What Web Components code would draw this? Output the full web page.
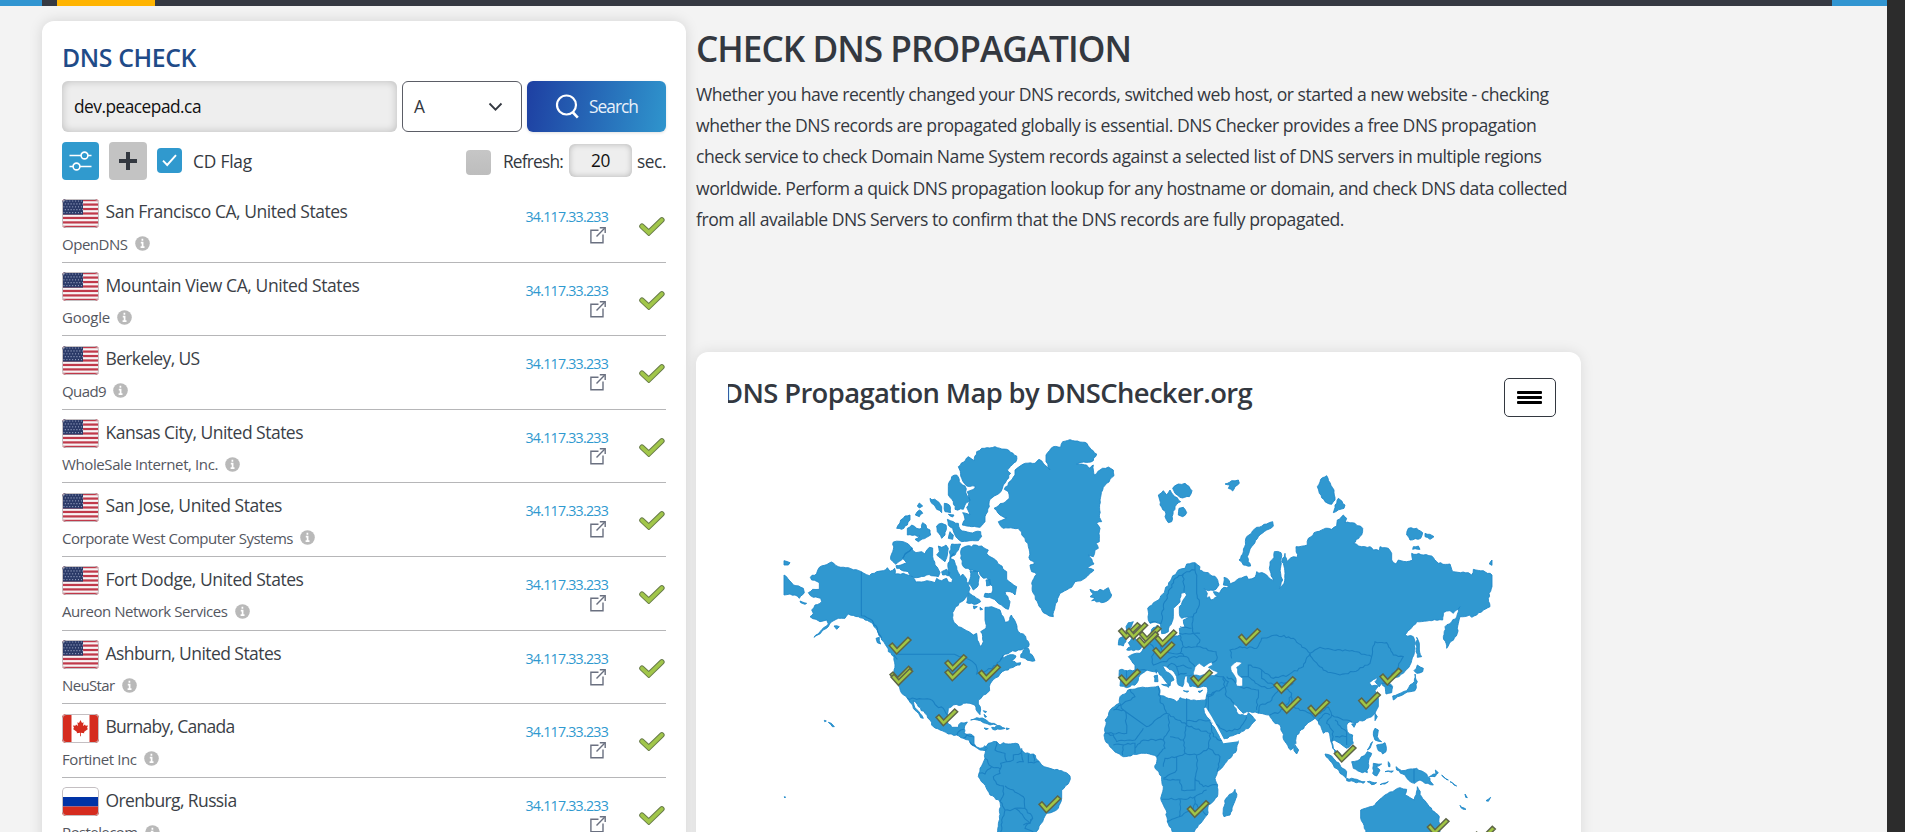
<!DOCTYPE html>
<html lang="en">
<head>
<meta charset="utf-8">
<title>DNS Checker</title>
<style>
html,body{margin:0;height:832px;overflow:hidden}
body{font-family:"Open Sans","Noto Sans",sans-serif;background:#f3f3f3;color:#333840}
</style>
</head>
<body>
<dns-app></dns-app>
<script>
const make = (name, render, after) => customElements.define(name, class extends HTMLElement {
  connectedCallback() {
    if (this.shadowRoot) return;
    this.attachShadow({ mode: 'open' }).innerHTML = render(this);
    if (after) after(this);
  }
});

/* Page frame */
make('dns-app', () => `
<style>
:host{display:grid;grid-template-columns:1887px 18px;height:832px;overflow:hidden}
.gutter{background:#2c2c2c}
.page{display:flex;flex-direction:column;min-width:0;height:832px;overflow:hidden}
main{display:grid;grid-template-columns:644px 885px;column-gap:10px;padding-left:42px;align-items:start}
</style>
<div class="page"><top-strip></top-strip>
<main><check-panel></check-panel><info-column></info-column></main></div>
<div class="gutter"></div>`);

make('top-strip', () => `
<style>
:host{display:flex;height:6px;background:#353942;flex:none}
i{display:block;height:6px}
.a{width:42px;background:#3195d1}.b{width:98px;margin-left:15px;background:#ffb400}.c{width:55px;margin-left:auto;background:#3195d1}
</style><i class="a"></i><i class="b"></i><i class="c"></i>`);

/* Left panel */
const servers = [
  ['us', 'San Francisco CA, United States', 242, 'OpenDNS', 65.5],
  ['us', 'Mountain View CA, United States', 254, 'Google', 48],
  ['us', 'Berkeley, US', 94, 'Quad9', 44],
  ['us', 'Kansas City, United States', 197.5, 'WholeSale Internet, Inc.', 156],
  ['us', 'San Jose, United States', 176.5, 'Corporate West Computer Systems', 231],
  ['us', 'Fort Dodge, United States', 198, 'Aureon Network Services', 165.5],
  ['us', 'Ashburn, United States', 175.5, 'NeuStar', 52.5],
  ['ca', 'Burnaby, Canada', 129, 'Fortinet Inc', 74.5],
  ['ru', 'Orenburg, Russia', 131, 'Rostelecom', 75.5]
];
make('check-panel', () => `
<style>
:host{display:block;box-sizing:border-box;margin-top:15px;height:840px;padding:22px 20px 0;background:#fff;border-radius:12px;box-shadow:0 0 14px rgba(0,0,0,.13)}
h2{margin:0;font-size:24.8px;line-height:28px;font-weight:600;color:#1f4b88;height:38px}
</style>
<h2><fit-text w="134">DNS CHECK</fit-text></h2>
<search-bar></search-bar><option-bar></option-bar>
${servers.map(s => `<server-row flag="${s[0]}" place="${s[1]}" pw="${s[2]}" org="${s[3]}" ow="${s[4]}"></server-row>`).join('')}`);

make('search-bar', () => `
<style>
:host{display:grid;grid-template-columns:335px 120px 139px;column-gap:5px;height:51px;font-size:17.3px}
:host>div{box-sizing:border-box;height:51px;border-radius:6px;display:flex;align-items:center}
.in{background:#eee;padding-left:12px;color:#111;box-shadow:inset 0 0 8px rgba(0,0,0,.22)}
.sel{border:1px solid #5b5d66;padding:0 18px 0 11px;justify-content:space-between}
.go{background:linear-gradient(100deg,#1e3fa2,#2f95cd);color:#e9f1fa;padding-left:28px;gap:9px;box-shadow:0 1px 3px rgba(0,0,0,.12)}
svg{display:block;flex:none}
</style>
<div class="in"><fit-text w="127">dev.peacepad.ca</fit-text></div>
<div class="sel"><fit-text w="12">A</fit-text><svg width="15" height="10" viewBox="0 0 15 10" fill="none" stroke="#333840" stroke-width="1.8"><path d="M1.5 1.5L7.5 7.7L13.5 1.5"/></svg></div>
<div class="go"><svg width="25" height="25" viewBox="0 0 25 25" fill="none" stroke="#fff" stroke-width="2.2"><circle cx="11.5" cy="11" r="9.5"/><path d="M17.5 18L22.8 23.6" stroke-width="2.6"/></svg><fit-text w="49">Search</fit-text></div>`);

make('option-bar', () => `
<style>
:host{display:flex;align-items:center;height:57px;font-size:17.3px;box-sizing:border-box}
.btn{width:37px;height:38px;border-radius:4px;background:#309ace;display:grid;place-items:center;margin-right:10px}
.g{background:#c3c3c3;width:38px}
.chk{width:25px;height:25px;border-radius:4px;background:#3099ce;display:grid;place-items:center;margin-right:11px}
.off{background:linear-gradient(#c6c6c6,#bdbdbd);margin:3px 12px 0 auto}
.num{width:63px;height:33px;border-radius:6px;background:#eee;box-shadow:inset 0 0 6px rgba(0,0,0,.25);display:grid;place-items:center;margin:0 5px 0 6px;color:#111}
.t{margin-top:1px}svg{display:block}
</style>
<div class="btn"><svg width="23" height="20" viewBox="0 0 23 20" fill="none" stroke="#fff" stroke-width="1.6"><path d="M.5 4.5H12M19 4.5H22.5M.5 15.5H4M11 15.5H22.5"/><circle cx="15.5" cy="4.5" r="3.4"/><circle cx="7.5" cy="15.5" r="3.4"/></svg></div>
<div class="btn g"><svg width="18" height="18" viewBox="0 0 18 18"><path d="M9 0V18M0 9H18" stroke="#333840" stroke-width="4"/></svg></div>
<div class="chk"><svg width="15" height="13" viewBox="0 0 15 13"><path d="M1 6.7L5.2 11L14 1.2" fill="none" stroke="#fff" stroke-width="1.9"/></svg></div>
<span class="t"><fit-text w="59">CD Flag</fit-text></span>
<div class="chk off"></div>
<span class="t"><fit-text w="60">Refresh:</fit-text></span>
<div class="num"><fit-text w="19">20</fit-text></div>
<span class="t"><fit-text w="29">sec.</fit-text></span>`);

make('server-row', h => `
<style>
:host{display:grid;grid-template-columns:1fr 90px 58px;box-sizing:border-box;height:73.6px;border-bottom:1.6px solid #b6b6b8}
.l1{display:flex;align-items:center;height:30px;margin-top:9px;gap:6.5px;font-size:17.5px;color:#3b3f47}
.l1 fit-text{margin-top:-4px}
.l2{display:flex;align-items:center;height:19px;margin-top:6px;gap:7px;font-size:15px;color:#54575f}
.ip{text-align:right;color:#2f99cf;font-size:14.2px;line-height:18px;padding-top:19px;display:flex;flex-direction:column;align-items:flex-end}
.ip svg{margin:1px 2px 0 0}
.ok{display:block;margin:28px 0 0 31px}
svg{display:block;flex:none}
</style>
<div><div class="l1"><country-flag code="${h.getAttribute('flag')}"></country-flag><fit-text w="${h.getAttribute('pw')}">${h.getAttribute('place')}</fit-text></div>
<div class="l2"><fit-text w="${h.getAttribute('ow')}">${h.getAttribute('org')}</fit-text><svg width="15" height="15" viewBox="0 0 15 15"><circle cx="7.5" cy="7.5" r="7.3" fill="#b9b9b9"/><path d="M7.4 2.8V4.8M5.8 6.7H7.6V11.2M5.6 11.2H9.5" fill="none" stroke="#fff" stroke-width="1.7"/></svg></div></div>
<div class="ip"><fit-text w="82.5">34.117.33.233</fit-text>
<svg width="16" height="17" viewBox="0 0 16 17" fill="none" stroke="#6a7080" stroke-width="1.4"><path d="M8.5 3.2H.9V15.7H13V7.5"/><path d="M6.5 9.5L14.6 1.3"/><path d="M9.8.8H15.2V6"/></svg></div>
<svg class="ok" width="26" height="19" viewBox="0 0 26 19"><path d="M3 9.3L9.8 15.6L22.8 3" fill="none" stroke="#677a48" stroke-width="5.6" stroke-linecap="round"/><path d="M3 9.3L9.8 15.6L22.8 3" fill="none" stroke="#a1c64a" stroke-width="3.7" stroke-linecap="round"/></svg>`);

const flags = {
  us: () => {
    let s = '<rect width="37" height="29" fill="#f7f4f5"/>';
    for (let i = 0; i < 7; i++) s += `<rect y="${(i * 4.46).toFixed(2)}" width="37" height="2.23" fill="#c0394a"/>`;
    s += '<rect width="21" height="15.6" fill="#2b3a68"/>';
    for (let r = 0; r < 5; r++) for (let c = 0; c < 7; c++) s += `<circle cx="${2 + c * 2.9 + (r % 2) * 1.3}" cy="${2 + r * 2.9}" r=".6" fill="#a3adc9"/>`;
    return s;
  },
  ca: () => '<rect width="37" height="29" fill="#fff"/><rect width="9.5" height="29" fill="#d52b1e"/><rect x="27.5" width="9.5" height="29" fill="#d52b1e"/><path fill="#d52b1e" d="M18.5 6L20 9L21.6 8.2L21 12L23 10.4L23.6 11.7L26 11.4L25 14L26 15L22 18L22.3 19.2L18.9 18.7V22.3H18.1V18.7L14.7 19.2L15 18L11 15L12 14L11 11.4L13.4 11.7L14 10.4L16 12L15.4 8.2L17 9Z"/>',
  ru: () => '<rect width="37" height="29" fill="#fff"/><rect y="10" width="37" height="9.5" fill="#0033a6"/><rect y="19.5" width="37" height="9.5" fill="#d52b1e"/>'
};
make('country-flag', h => `
<style>:host{display:block;width:37px;height:29px;border-radius:4px;overflow:hidden;flex:none}svg{display:block}</style>
<svg width="37" height="29" viewBox="0 0 37 29">${flags[h.getAttribute('code')]()}<rect x=".5" y=".5" width="36" height="28" rx="3.5" fill="none" stroke="#c4bfc2"/></svg>`);

/* Right column */
make('info-column', () => `
<style>
:host{display:block}
h1{margin:19px 0 0;font-size:35.2px;line-height:46px;font-weight:600;color:#333840}
p{margin:8px 0 0;font-size:17.6px;line-height:31.2px;height:156px}
p fit-text{display:block}
map-card{margin-top:117px}
</style>
<h1><fit-text w="435">CHECK DNS PROPAGATION</fit-text></h1>
<p><fit-text w="852.5">Whether you have recently changed your DNS records, switched web host, or started a new website - checking</fit-text>
<fit-text w="840.5">whether the DNS records are propagated globally is essential. DNS Checker provides a free DNS propagation</fit-text>
<fit-text w="845.5">check service to check Domain Name System records against a selected list of DNS servers in multiple regions</fit-text>
<fit-text w="871">worldwide. Perform a quick DNS propagation lookup for any hostname or domain, and check DNS data collected</fit-text>
<fit-text w="648">from all available DNS Servers to confirm that the DNS records are fully propagated.</fit-text></p>
<map-card></map-card>`);

make('map-card', () => `
<style>
:host{display:block;box-sizing:border-box;height:520px;background:#fff;border-radius:12px;box-shadow:0 0 14px rgba(0,0,0,.1);padding:20px 25px 0 32px;overflow:hidden}
header{display:flex;justify-content:space-between;height:48px}
.ttl{overflow:hidden;height:48px;line-height:42px;font-size:27.4px;font-weight:600;width:600px}
.ttl fit-text{margin-left:-5px}
.menu{box-sizing:border-box;margin-top:6px;width:52px;height:39px;border:1.4px solid #333840;border-radius:5px;display:flex;flex-direction:column;align-items:center;justify-content:center;gap:2px;padding-right:1px}
.menu i{width:25px;height:3px;border-radius:1px;background:#000}
world-map{margin-left:56px}
</style>
<header><div class="ttl"><fit-text w="529">DNS Propagation Map by DNSChecker.org</fit-text></div><div class="menu"><i></i><i></i><i></i></div></header>
<world-map></world-map>`);

/* Map geometry: west group uses absolute units, east group is shifted by 930 */
const west = [
'121,472 140,460 148,442 163,436 184,426 205,440 235,443 274,455 298,467 320,455 340,452 352,443 360,454 374,445 375,462 400,460 425,468 434,478 437,486 470,482 495,488 500,475 515,482 530,475 535,486 545,488 548,478 536,462 534,430 540,415 552,420 560,440 565,458 572,470 578,462 585,470 590,485 600,505 595,520 590,530 575,545 557,560 548,578 549,600 565,620 590,632 610,645 620,640 622,660 632,680 640,665 638,650 632,635 648,625 645,600 645,562 665,560 690,570 700,590 705,607 715,605 724,585 738,610 745,635 760,642 775,665 776,680 768,684 745,690 720,697 700,706 690,718 710,708 730,704 738,708 735,715 725,722 735,725 740,730 752,728 750,735 730,742 718,745 715,750 697,755 690,762 685,770 665,785 658,800 659,812 640,825 625,840 625,852 632,870 630,884 622,875 614,855 600,850 580,850 575,855 550,855 535,865 532,885 532,905 545,922 565,922 572,908 592,906 583,925 582,940 600,942 612,950 612,970 618,980 630,985 645,977 652,985 647,992 630,990 622,985 605,975 597,960 580,955 560,945 535,942 510,930 485,915 480,900 465,880 445,860 430,842 432,855 450,880 460,895 452,893 440,875 430,865 428,855 412,835 395,820 385,795 372,775 372,750 375,735 372,710 355,695 350,680 335,660 325,640 318,625 305,608 285,600 265,590 235,582 225,595 205,595 185,605 175,620 155,635 132,652 150,635 175,612 170,600 150,605 138,598 120,590 130,580 125,570 135,555 155,545 152,535 130,532 115,518 128,508 148,508 148,488 125,480',
'760,690 775,685 778,700 790,710 795,722 780,722 765,715 752,712','318,655 328,652 332,672 322,668',
'370,366 390,364 415,372 428,385 410,400 395,420 378,433 362,418 368,395',
'425,385 438,398 455,395 465,402 478,382 488,384 488,410 495,435 510,458 505,470 470,465 440,473 425,468 415,455 380,445 378,437 400,432 410,428 398,415 405,400',
'505,378 515,382 528,375 535,385 532,405 525,425 512,415 500,405 508,395','545,372 572,372 565,390 555,405 540,415 538,395','515,455 530,448 540,458 535,468 518,465',
'575,385 590,378 605,380 610,375 635,378 655,390 650,400 670,415 690,435 710,455 710,478 725,490 740,500 735,525 720,515 705,515 720,545 715,568 700,560 680,545 665,535 642,530 645,520 665,520 668,500 655,478 635,470 628,455 600,450 580,440 572,415',
'600,452 622,455 628,470 625,495 610,510 595,490 602,470','597,518 615,530 632,545 620,552 590,548','610,558 622,560 612,567','648,480 660,478 662,495 650,498','630,562 638,568 631,570',
'412,325 425,315 440,325 455,325 458,308 468,315 470,325 480,330 482,345 470,352 445,365 435,358 450,348 412,345','380,325 392,300 405,288 420,285 420,300 412,315 395,328','442,258 448,249 458,258 448,264','436,285 448,270 458,280 448,290',
'480,235 500,242 515,260 515,278 500,268 485,250','523,250 538,255 542,278 525,275','535,283 552,285 548,291','500,318 515,310 528,315 525,345 515,355 502,335','540,335 550,345 548,358 535,355',
'532,298 550,305 565,310 570,328 600,338 632,335 635,350 625,362 600,362 575,365 555,345 548,325 535,315',
'545,170 560,165 568,185 585,198 590,225 600,240 585,255 580,268 555,268 550,245 535,225 535,200',
'565,140 595,110 612,122 620,95 635,85 675,80 710,88 740,108 738,125 712,150 722,160 710,180 700,195 688,220 660,238 658,260 645,290 645,305 630,322 605,320 577,315 585,298 578,278 600,285 590,262 600,240 592,215 615,205 615,198 590,198 575,175',
'735,150 760,132 795,130 807,118 820,130 840,150 828,125 828,105 850,80 872,82 878,65 900,59 945,67 980,102 970,122 920,132 950,135 960,145 970,135 972,165 990,150 1015,141 1030,150 1032,167 1010,190 998,210 990,240 988,285 995,305 980,310 990,325 988,365 978,370 985,385 975,390 970,410 955,405 972,432 952,445 972,450 940,478 915,485 905,502 870,520 862,545 855,560 850,590 838,588 820,578 802,545 790,520 785,490 800,462 785,455 780,435 795,430 780,420 775,380 765,355 745,325 700,325 685,305 710,293 690,285 672,265 718,235 715,215 703,208 735,165',
'960,508 975,515 990,508 1000,512 1015,503 1025,525 1015,540 995,548 965,542 975,535 960,530 970,522',
'647,992 645,985 655,970 680,965 690,975 700,968 715,972 745,972 750,985 765,1000 790,1002 808,1025 815,1035 840,1045 875,1052 900,1068 898,1085 875,1110 875,1135 865,1165 850,1175 830,1180 818,1205 795,1240 682,1240 688,1190 690,1145 660,1125 640,1090 625,1070 630,1045 645,1015',
'602,900 620,893 645,898 665,910 680,915 660,915 640,908 622,900','665,922 690,917 705,925 690,928 668,928','642,924 655,926 648,929','708,924 718,926 710,929','640,872 650,875 645,878','642,883 650,890 645,892',
'163,901 169,903 164,905','175,907 184,910 193,920 187,920 182,913','42,422 60,428 55,435 42,435','42,465 70,495 100,505 103,518 88,535 75,525 60,522 42,525','90,543 110,550 105,553 92,548','43,1130 47,1131 44,1134','192,618 208,620 200,628'];
const east = [
'203,565 240,535 255,510 275,475 295,450 315,445 320,432 345,428 360,440 358,450 385,458 410,475 417,495 408,508 385,512 372,505 382,520 380,535 388,530 392,540 412,530 400,515 418,520 432,502 448,500 430,495 432,472 448,482 450,492 470,480 500,468 505,478 525,472 530,455 560,465 580,482 568,445 570,425 582,412 583,395 603,398 604,430 602,460 608,480 598,505 612,490 615,460 610,430 605,425 615,400 620,425 640,410 652,412 648,380 682,375 685,355 710,335 745,325 755,328 770,318 772,300 790,285 800,295 795,308 825,310 848,325 845,345 820,370 845,380 870,380 880,390 898,392 900,380 925,385 935,400 935,420 948,432 955,420 980,425 998,420 995,400 1030,405 1055,408 1075,430 1110,432 1118,455 1165,458 1175,465 1180,448 1210,452 1236,465 1236,500 1225,535 1230,560 1210,570 1175,592 1168,585 1140,590 1135,610 1132,640 1100,685 1090,650 1095,620 1115,605 1130,590 1140,560 1120,580 1110,572 1090,578 1088,600 1055,602 1010,605 975,645 1000,650 1005,670 1003,700 990,735 970,760 950,772 925,783 938,800 935,818 918,822 915,800 905,790 898,800 885,785 892,772 868,788 875,798 895,798 885,812 895,835 895,860 880,885 855,900 825,908 810,905 800,915 802,935 818,945 820,970 800,985 790,978 780,970 762,960 755,965 760,985 780,1000 788,1020 775,1010 758,985 750,950 745,935 730,940 715,905 705,895 690,905 650,945 648,970 632,990 615,965 600,915 580,905 568,885 540,880 510,875 490,880 475,865 460,850 470,875 480,885 502,886 505,878 527,900 510,920 480,940 428,958 420,935 400,910 385,880 375,862 378,845 380,825 383,815 380,800 360,802 330,800 322,785 322,770 335,765 315,768 312,780 308,800 295,795 290,770 275,750 262,742 248,738 258,755 278,770 282,780 272,785 270,798 262,790 250,775 235,755 220,755 200,750 180,765 170,790 150,800 140,803 120,798 118,750 150,750 165,750 165,735 145,710 160,702 180,700 190,685 210,672 214,655 215,628 232,615 235,630 228,650 240,662 255,660 270,652 300,645 298,625 315,620 310,600 340,590 330,590 305,595 298,580 298,560 320,525 315,517 303,520 300,545 280,565 280,590 265,635 245,641 240,610 230,605 210,610 204,590',
'120,830 150,808 180,803 235,798 240,810 238,825 265,835 290,845 300,833 325,838 350,842 380,838 375,862 372,870 390,905 405,925 425,958 435,970 475,962 470,990 440,1025 412,1055 405,1075 413,1095 412,1130 385,1155 382,1185 355,1215 340,1240 280,1240 262,1205 258,1170 242,1135 250,1100 245,1070 225,1045 230,1010 200,1000 175,1002 130,1010 100,990 75,960 72,945 78,915 75,900 95,865 118,850',
'145,608 160,605 150,625 160,645 175,668 185,680 175,690 140,690 152,680 145,668 155,655 140,640 138,620','118,655 133,648 138,665 130,678 115,675',
'235,225 250,212 260,225 270,210 285,230 302,245 285,260 275,305 265,308 255,290 258,282 240,255','278,205 295,192 315,190 336,212 328,230 300,232 285,220','297,265 310,262 320,278 308,290 295,285','435,192 455,182 475,180 478,190 465,200 458,213 445,205 450,195',
'578,305 580,318 560,330 535,350 515,380 502,410 512,438 490,435 477,420 490,395 500,350 530,322 560,312','740,167 762,210 765,240 755,253 735,245 718,220 712,200 722,178','775,235 795,255 792,265 760,278 765,255','985,325 1010,325 1028,338 1022,355 990,360 980,345','1035,340 1062,350 1050,358 1035,350','1000,380 1015,378 1020,388 998,388','1236,420 1228,432 1236,436',
'1010,652 1018,670 1018,690 1025,710 1012,712 1008,695','1012,735 1030,745 1028,755 1010,760 1002,752','1005,762 1012,785 1005,812 975,820 960,828 940,840 938,828 955,822 980,812 990,795 1003,785','885,880 892,890 885,902','815,912 828,910 822,922','645,975 656,990 650,1002 642,992',
'885,925 895,930 892,950 905,965 885,960 880,945','890,975 915,968 918,995 908,1002 892,985','862,990 878,965 870,985',
'735,1002 755,1008 780,1035 800,1055 798,1075 780,1060 760,1035','800,1075 830,1078 855,1085 850,1090 800,1082','815,1025 840,1018 862,995 875,1000 865,1030 862,1058 840,1055 820,1045','880,1030 905,1032 888,1040 900,1050 890,1068 878,1060','862,1085 890,1088 875,1094','900,1094 925,1085 915,1092','925,1025 930,1040 926,1040','915,1055 940,1053 935,1057',
'948,1040 965,1052 985,1048 1010,1045 1040,1062 1060,1095 1035,1090 1020,1080 1005,1090 985,1080 975,1065 950,1050','1048,1070 1068,1062 1066,1050 1075,1058 1065,1070','1085,1065 1105,1080 1098,1078','1110,1085 1130,1098 1122,1095','1155,1122 1162,1133 1157,1132','1140,1156 1158,1168 1150,1168','1218,1142 1232,1132 1225,1144',
'842,1170 885,1155 915,1125 945,1110 960,1103 980,1108 975,1125 1003,1140 1012,1100 1025,1130 1048,1160 1078,1190 1080,1240 858,1240 842,1195','465,1108 470,1130 450,1185 432,1190 430,1165 438,1135',
'222,768 232,765 234,785 224,785','226,750 231,750 229,760','245,793 268,792 266,802','310,812 326,813 322,817','354,814 368,810 360,818'];
const seas = ['340,765 345,742 358,730 372,740 395,726 398,736 385,742 415,758 402,767 380,763 360,768','452,740 470,725 487,728 470,742 475,765 488,775 488,798 470,798 468,775 455,755'];
const linesW = ['274,455 274,587 300,597 322,625 335,655','382,703 545,703 575,710 600,720 618,735 620,762 650,752 680,735 700,706','372,705 382,718','412,835 440,838 480,838 500,858 520,865 532,885','560,945 572,930 582,928','580,955 590,945 612,950','600,965 618,980','425,385 405,402 398,415','540,415 552,400','680,965 675,990 705,1000 710,1025 692,1030 690,1060 670,1070 680,1092 700,1098 698,1130 690,1145 705,1170 695,1200 692,1236','710,1025 730,1020 730,1005 752,1000 755,985','755,1000 760,1025 740,1028','775,1003 775,1028 808,1025','790,1003 792,1025','628,1060 645,1062 665,1040 692,1048','645,1015 665,1040','705,1098 730,1110 760,1130 765,1165 735,1165 720,1172 705,1170','765,1165 788,1195 780,1210 760,1215','735,1165 780,1210','788,1195 765,1225 790,1236'];
const linesE = ['210,608 225,605 243,610 250,560 265,520 285,475 310,462 320,455 345,450 345,430','310,462 312,515','345,450 350,475 350,520 358,555 340,590','338,590 340,640 360,660 350,680 370,685 408,695 410,720 395,728','300,620 335,625','298,640 325,642 360,640','300,645 310,680 350,680','310,680 300,700 320,710 345,740','240,662 245,690 275,700 300,700','210,672 225,690 215,710 220,735 235,730','235,730 260,725 275,712 320,710','262,742 275,730 290,740 310,735 335,745','290,740 295,765 320,760','165,750 200,752','140,752 138,798','150,808 165,830 130,850 100,870','120,850 130,870 200,920 260,880 240,840 235,800','100,870 132,870','135,872 140,940 85,940','260,880 320,915 320,835','320,902 392,902','265,885 268,930 250,960 190,960 165,985','250,960 255,985 230,1010','270,950 310,960 320,915','310,960 315,1000 290,1010 255,1015 250,1040','320,915 392,940 385,985 350,1005 315,1000','390,905 400,950 432,965','385,985 420,1010 412,1055','350,1005 352,1045 345,1075 370,1100 412,1095','290,1010 290,1050 250,1075','250,1078 300,1080 305,1110 345,1110 345,1075','245,1138 310,1138 345,1130 380,1110','300,1138 298,1190 262,1205','298,1190 340,1165 345,1130','345,1150 380,1185','75,940 100,945 110,965 165,960 190,925','100,975 130,975 128,1005','130,975 165,970 165,1000','385,880 385,830 435,800 440,830 462,850','435,800 430,770 400,767','380,830 405,815','440,770 460,780 478,800 535,810 530,870','395,905 440,935 480,925 500,890','430,770 445,785 440,800','478,770 505,770 545,800 570,805 590,790 640,790 605,800 570,845 540,855','540,855 535,880','610,800 635,820 625,850 600,875 570,885','635,820 640,860 690,880 720,880 745,860','690,880 705,895','455,715 450,690 480,680 530,685 545,655 590,645 640,655 690,700 670,740 625,765 580,775 545,750 505,735 505,770','545,750 545,775 585,800','690,700 720,682 760,690 830,695 875,710 870,730 820,755 780,765 730,750 700,720 690,700','875,710 885,665 920,668 940,705 970,710 955,740 925,780','905,790 935,800','745,860 755,885 780,895 800,900 815,905','715,905 735,880 750,885','755,885 740,910 760,935 755,965','765,900 785,925 800,935 800,975','765,950 800,950','1002,1045 1002,1085'];
const marksW = [[380,702],[382,789],[385,796],[547,782],[547,754],[648,784],[520,917],[829,1178]];
const marksE = [[138,658],[160,658],[200,668],[192,685],[247,680],[241,716],[138,798],[354,800],[498,676],[604,820],[620,880],[706,889],[858,867],[922,795],[785,1026],[344,1192],[1064,1246],[1203,1269]];
let seed = 7;
const rnd = () => ((seed = (seed * 16807) % 2147483647) / 2147483647) - .5;
function coast(str, close, amp) {
  const p = str.split(' ').map(s => s.split(',').map(Number));
  const out = [];
  const n = close ? p.length : p.length - 1;
  for (let i = 0; i < n; i++) {
    const a = p[i], b = p[(i + 1) % p.length];
    out.push(a);
    const L = Math.hypot(b[0] - a[0], b[1] - a[1]);
    const straight = L > 80 || a[0] === b[0];
    const k = straight ? 1 : Math.floor(L / 7);
    for (let j = 1; j < k; j++) {
      const t = j / k, d = rnd() * amp;
      out.push([a[0] + (b[0] - a[0]) * t - (b[1] - a[1]) / L * d, a[1] + (b[1] - a[1]) * t + (b[0] - a[0]) / L * d]);
    }
  }
  if (!close) out.push(p[p.length - 1]);
  return 'M' + out.map(q => q[0].toFixed(1) + ' ' + q[1].toFixed(1)).join('L') + (close ? 'Z' : '');
}
const land = a => `<path class="land" d="${a.map(s => coast(s, true, 5)).join('')}"/>`;
const lines = a => `<path class="line" d="${a.map(s => coast(s, false, 6)).join('')}"/>`;
const marks = a => a.map(([x, y]) => `<path class="mark" d="M${x} ${y}l-22 -25l9 -8l14 16l33 -33l9 8z"/>`).join('');
make('world-map', () => `
<style>
:host{display:block;width:708px;height:412px}
svg{display:block;overflow:visible}
.land{fill:#3098d0;stroke:#1e88c8;stroke-width:2.6;stroke-linejoin:round}
.line{fill:none;stroke:#1b80c2;stroke-width:3.2}
.sea{fill:#fff;stroke:#1e88c8;stroke-width:2}
.mark{fill:#a2c644;stroke:#5d6547;stroke-width:4.4}
</style>
<svg width="708" height="412" viewBox="42 0 2124 1236">
${land(west)}${lines(linesW)}
<g transform="translate(930 0)">${land(east)}${lines(linesE)}<path class="sea" d="${seas.map(s => coast(s, true, 3)).join('')}"/><path d="M375 864L392 892L410 924L428 958L432 966L475 960" fill="none" stroke="#fff" stroke-width="7"/></g>
${marks(marksW)}<g transform="translate(930 0)">${marks(marksE)}</g>
</svg>`);

/* Inline label whose tracking is tuned to the width given in "w" */
make('fit-text', h => `<style>:host{display:inline-block;white-space:nowrap}</style><span><slot></slot></span>`, h => {
  const w = parseFloat(h.getAttribute('w')), r = document.createRange();
  r.selectNodeContents(h);
  const n = h.textContent.length, cur = r.getBoundingClientRect().width;
  h.style.letterSpacing = ((w - cur) / n).toFixed(3) + 'px';
  h.style.width = w + 'px';
});
</script>
</body>
</html>
